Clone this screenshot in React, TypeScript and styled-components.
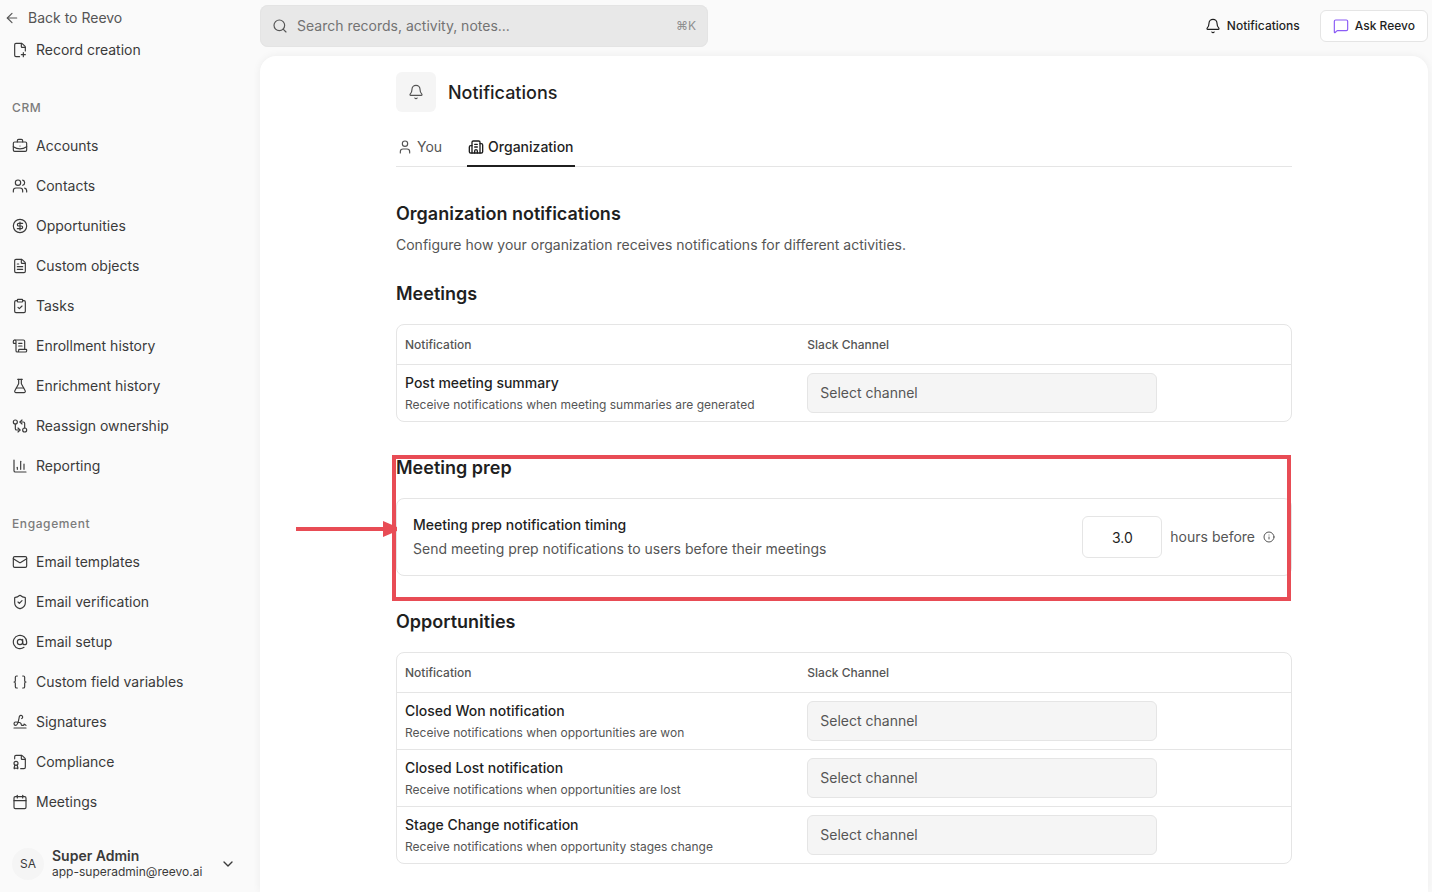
import React from 'react';
import styled, { createGlobalStyle, css } from 'styled-components';
import {
  ArrowLeft, AtSign, Bell, Braces, BriefcaseBusiness, Building2, Calendar, ChartColumn, ChevronDown,
  CircleDollarSign, ClipboardCheck, FileBadge, FilePlusCorner, FileText, FlaskConical, GitCompareArrows,
  Info, Mail, MessageSquare, ScrollText, Search, ShieldCheck, Signature, User, Users,
} from 'lucide-react';
import type { LucideIcon } from 'lucide-react';

const color = {
  page: '#fafafa',
  surface: '#ffffff',
  muted: '#f5f5f5',
  line: '#e5e5e5',
  ink: '#1f1f1f',
  nav: '#3a3a3a',
  body: '#555555',
  faint: '#7c7c7c',
  search: '#e8e8e8',
  accent: '#8b5cf6',
  marker: '#e84c55',
};

const GlobalStyle = createGlobalStyle`
  *, *::before, *::after { box-sizing: border-box; }
  body {
    margin: 0;
    background: ${color.page};
    color: ${color.ink};
    font-family: Inter, 'Liberation Sans', sans-serif;
    font-size: 14px;
    line-height: 20px;
  }
  h1, h2, p { margin: 0; }
  button, input, select { font: inherit; color: inherit; }
  a { color: inherit; text-decoration: none; }
`;

const Shell = styled.div`
  display: flex;
  height: 100vh;
`;

const Sidebar = styled.aside`
  display: flex;
  flex-direction: column;
  flex: 0 0 260px;
  color: ${color.nav};
`;

const BackLink = styled.a`
  display: flex;
  align-items: center;
  gap: 8px;
  padding: 8px 4px 2px;
  color: ${color.body};
`;

const Nav = styled.nav`
  flex: 1;
  min-height: 0;
  overflow-y: auto;
  scrollbar-width: none;
`;

const NavHeading = styled.h2`
  padding: 28px 12px 8px;
  font-size: 12px;
  font-weight: 500;
  line-height: 20px;
  letter-spacing: 0.05em;
  color: ${color.faint};
`;

const NavLink = styled.a`
  display: flex;
  align-items: center;
  gap: 8px;
  height: 40px;
  padding: 0 12px;
`;

const AccountButton = styled.button`
  display: flex;
  align-items: center;
  gap: 8px;
  height: 56px;
  padding: 0 24px 0 12px;
  border: 0;
  background: none;
  text-align: left;
`;

const Avatar = styled.span`
  display: grid;
  place-items: center;
  width: 32px;
  height: 32px;
  border-radius: 50%;
  background: ${color.muted};
  font-size: 12px;
`;

const AccountText = styled.span`
  display: flex;
  flex: 1;
  flex-direction: column;
  font-size: 12px;
  line-height: 16px;
`;

const AccountName = styled.strong`
  font-size: 14px;
  font-weight: 600;
`;

const Main = styled.div`
  display: flex;
  flex: 1;
  flex-direction: column;
  min-width: 0;
  padding-right: 4px;
`;

const TopBar = styled.header`
  display: flex;
  align-items: center;
  justify-content: space-between;
  flex: 0 0 56px;
  padding-bottom: 4px;
`;

const SearchBox = styled.label`
  display: flex;
  align-items: center;
  gap: 9px;
  width: 448px;
  height: 42px;
  padding: 0 12px;
  border-radius: 8px;
  background: ${color.search};
  box-shadow: inset 0 0 0 1px #e4e4e4;
  color: ${color.body};
`;

const SearchInput = styled.input`
  flex: 1;
  min-width: 0;
  padding: 0;
  border: 0;
  outline: 0;
  background: none;
  &::placeholder { color: #737373; opacity: 1; }
`;

const Shortcut = styled.kbd`
  font-family: inherit;
  font-size: 12px;
  color: #8f8f8f;
`;

const Actions = styled.div`
  display: flex;
  gap: 8px;
`;

const ActionButton = styled.button<{ $outlined?: boolean }>`
  display: flex;
  align-items: center;
  gap: 6px;
  height: 32px;
  padding: 0 12px;
  border: 0;
  border-radius: 6px;
  background: none;
  font-size: 12px;
  font-weight: 500;
  ${p => p.$outlined && css`
    border: 1px solid ${color.line};
    background: ${color.surface};
    svg { color: ${color.accent}; }
  `}
`;

const Card = styled.main`
  flex: 1;
  min-height: 0;
  overflow-y: auto;
  padding: 16px 24px 24px;
  border-radius: 16px 16px 0 0;
  background: ${color.surface};
  box-shadow: 0 0 8px rgba(0, 0, 0, 0.06);
`;

const Content = styled.div`
  max-width: 896px;
  margin: 0 auto;
`;

const PageHeader = styled.header`
  display: flex;
  align-items: center;
  gap: 12px;
`;

const PageIcon = styled.span`
  display: grid;
  place-items: center;
  width: 40px;
  height: 40px;
  border-radius: 6px;
  background: ${color.muted};
  color: ${color.body};
`;

const PageTitle = styled.h1`
  font-size: 18px;
  font-weight: 500;
  line-height: 27px;
`;

const TabList = styled.div`
  display: flex;
  gap: 24px;
  margin-top: 16px;
  border-bottom: 1px solid ${color.line};
`;

const Tab = styled.button<{ $active?: boolean }>`
  display: flex;
  align-items: center;
  gap: 4px;
  height: 39px;
  margin-bottom: -1px;
  padding: 0 1px;
  border: 0;
  border-bottom: 2px solid ${p => (p.$active ? color.ink : 'transparent')};
  background: none;
  color: ${p => (p.$active ? color.ink : color.body)};
  font-weight: ${p => (p.$active ? 500 : 400)};
`;

const Section = styled.section`
  position: relative;
  margin-top: 32px;
`;

const Intro = styled.section`
  margin: 33px 0 25px;
`;

const SectionTitle = styled.h2`
  font-size: 18px;
  font-weight: 600;
  line-height: 28px;
`;

const Lead = styled.p`
  margin-top: 7px;
  color: ${color.body};
`;

const TableFrame = styled.div`
  margin-top: 16px;
  border: 1px solid ${color.line};
  border-radius: 8px;
`;

const Table = styled.table`
  width: 100%;
  border-collapse: collapse;
  table-layout: fixed;
`;

const HeadCell = styled.th<{ $wide?: boolean }>`
  width: ${p => (p.$wide ? '45%' : '55%')};
  height: 39px;
  padding: 0 8px;
  font-size: 12px;
  font-weight: 500;
  text-align: left;
  color: ${color.body};
`;

const BodyRow = styled.tr`
  box-shadow: inset 0 1px ${color.line};
`;

const Cell = styled.td`
  height: 57px;
  padding: 8px;
`;

const ItemTitle = styled.p`
  font-weight: 500;
`;

const ItemNote = styled.p<{ $large?: boolean }>`
  margin-top: 4px;
  font-size: ${p => (p.$large ? 14 : 12)}px;
  line-height: ${p => (p.$large ? 20 : 16)}px;
  color: ${color.body};
`;

const ChannelSelect = styled.select`
  display: block;
  appearance: none;
  width: 350px;
  max-width: 100%;
  height: 40px;
  padding: 0 12px;
  border: 1px solid ${color.line};
  border-radius: 6px;
  background: ${color.muted};
  color: ${color.body};
`;

const TimingPanel = styled.div`
  display: flex;
  align-items: center;
  justify-content: space-between;
  margin-top: 16px;
  padding: 16px;
  border: 1px solid ${color.line};
  border-radius: 8px;
`;

const TimingField = styled.label`
  display: flex;
  align-items: center;
  gap: 8px;
  color: ${color.body};
`;

const HoursInput = styled.input`
  width: 80px;
  height: 42px;
  border: 1px solid ${color.line};
  border-radius: 6px;
  background: ${color.surface};
  text-align: center;
  color: ${color.ink};
`;

const Highlight = styled.div`
  position: absolute;
  inset: 1px 1px -25px -4px;
  border: 4px solid ${color.marker};
  pointer-events: none;
`;

const Pointer = styled.svg`
  position: absolute;
  top: 67px;
  left: -100px;
  pointer-events: none;
`;

type NavEntry = [string, LucideIcon];

const crmLinks: NavEntry[] = [
  ['Accounts', BriefcaseBusiness],
  ['Contacts', Users],
  ['Opportunities', CircleDollarSign],
  ['Custom objects', FileText],
  ['Tasks', ClipboardCheck],
  ['Enrollment history', ScrollText],
  ['Enrichment history', FlaskConical],
  ['Reassign ownership', GitCompareArrows],
  ['Reporting', ChartColumn],
];

const engagementLinks: NavEntry[] = [
  ['Email templates', Mail],
  ['Email verification', ShieldCheck],
  ['Email setup', AtSign],
  ['Custom field variables', Braces],
  ['Signatures', Signature],
  ['Compliance', FileBadge],
  ['Meetings', Calendar],
];

const NavItems = ({ items }: { items: NavEntry[] }) => (
  <>
    {items.map(([label, Icon]) => (
      <NavLink href="#" key={label}>
        <Icon size={16} strokeWidth={1.75} />
        {label}
      </NavLink>
    ))}
  </>
);

interface Item {
  title: string;
  note: string;
}

const meetingItems: Item[] = [
  { title: 'Post meeting summary', note: 'Receive notifications when meeting summaries are generated' },
];

const opportunityItems: Item[] = [
  { title: 'Closed Won notification', note: 'Receive notifications when opportunities are won' },
  { title: 'Closed Lost notification', note: 'Receive notifications when opportunities are lost' },
  { title: 'Stage Change notification', note: 'Receive notifications when opportunity stages change' },
];

const ChannelTable = ({ items }: { items: Item[] }) => (
  <TableFrame>
    <Table>
      <thead>
        <tr>
          <HeadCell $wide>Notification</HeadCell>
          <HeadCell>Slack Channel</HeadCell>
        </tr>
      </thead>
      <tbody>
        {items.map(({ title, note }) => (
          <BodyRow key={title}>
            <Cell>
              <ItemTitle>{title}</ItemTitle>
              <ItemNote>{note}</ItemNote>
            </Cell>
            <Cell>
              <ChannelSelect aria-label={title}>
                <option>Select channel</option>
              </ChannelSelect>
            </Cell>
          </BodyRow>
        ))}
      </tbody>
    </Table>
  </TableFrame>
);

export default function App() {
  return (
    <>
      <GlobalStyle />
      <Shell>
        <Sidebar>
          <BackLink href="#">
            <ArrowLeft size={16} strokeWidth={1.75} />
            Back to Reevo
          </BackLink>
          <Nav>
            <NavItems items={[['Record creation', FilePlusCorner]]} />
            <NavHeading>CRM</NavHeading>
            <NavItems items={crmLinks} />
            <NavHeading>Engagement</NavHeading>
            <NavItems items={engagementLinks} />
          </Nav>
          <AccountButton type="button">
            <Avatar>SA</Avatar>
            <AccountText>
              <AccountName>Super Admin</AccountName>
              app-superadmin@reevo.ai
            </AccountText>
            <ChevronDown size={16} />
          </AccountButton>
        </Sidebar>
        <Main>
          <TopBar>
            <SearchBox>
              <Search size={16} strokeWidth={1.75} />
              <SearchInput type="text" aria-label="Search" placeholder="Search records, activity, notes..." />
              <Shortcut>⌘K</Shortcut>
            </SearchBox>
            <Actions>
              <ActionButton type="button">
                <Bell size={16} strokeWidth={1.75} />
                Notifications
              </ActionButton>
              <ActionButton type="button" $outlined>
                <MessageSquare size={16} strokeWidth={1.75} />
                Ask Reevo
              </ActionButton>
            </Actions>
          </TopBar>
          <Card>
            <Content>
              <PageHeader>
                <PageIcon><Bell size={16} strokeWidth={1.75} /></PageIcon>
                <PageTitle>Notifications</PageTitle>
              </PageHeader>
              <TabList role="tablist">
                <Tab type="button" role="tab" aria-selected={false}>
                  <User size={16} strokeWidth={1.75} />
                  You
                </Tab>
                <Tab type="button" role="tab" aria-selected $active>
                  <Building2 size={16} />
                  Organization
                </Tab>
              </TabList>
              <Intro>
                <SectionTitle>Organization notifications</SectionTitle>
                <Lead>Configure how your organization receives notifications for different activities.</Lead>
              </Intro>
              <section>
                <SectionTitle>Meetings</SectionTitle>
                <ChannelTable items={meetingItems} />
              </section>
              <Section>
                <SectionTitle>Meeting prep</SectionTitle>
                <TimingPanel>
                  <div>
                    <ItemTitle>Meeting prep notification timing</ItemTitle>
                    <ItemNote $large>Send meeting prep notifications to users before their meetings</ItemNote>
                  </div>
                  <TimingField>
                    <HoursInput type="text" inputMode="decimal" defaultValue="3.0" />
                    hours before
                    <Info size={12} />
                  </TimingField>
                </TimingPanel>
                <Highlight />
                <Pointer width="101" height="16" viewBox="0 0 101 16" aria-hidden="true">
                  <path d="M0 6h87V0l14 6v4l-14 6v-6H0z" fill={color.marker} />
                </Pointer>
              </Section>
              <Section>
                <SectionTitle>Opportunities</SectionTitle>
                <ChannelTable items={opportunityItems} />
              </Section>
            </Content>
          </Card>
        </Main>
      </Shell>
    </>
  );
}
